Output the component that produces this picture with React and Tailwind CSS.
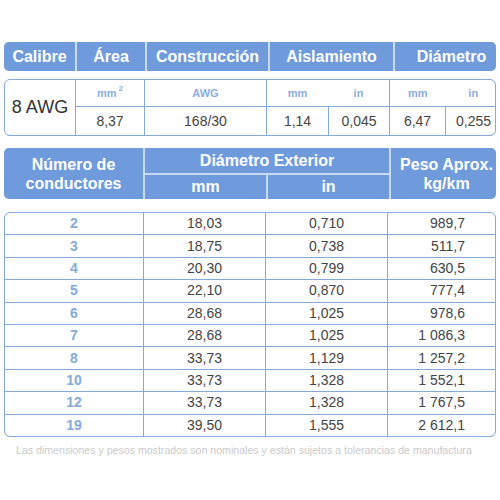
const ROWS = [
  ['2', '18,03', '0,710', '989,7'],
  ['3', '18,75', '0,738', '511,7'],
  ['4', '20,30', '0,799', '630,5'],
  ['5', '22,10', '0,870', '777,4'],
  ['6', '28,68', '1,025', '978,6'],
  ['7', '28,68', '1,025', '1 086,3'],
  ['8', '33,73', '1,129', '1 257,2'],
  ['10', '33,73', '1,328', '1 552,1'],
  ['12', '33,73', '1,328', '1 767,5'],
  ['19', '39,50', '1,555', '2 612,1'],
]

function Th({ children, className = '' }) {
  return (
    <div className={`flex items-center justify-center bg-[#6f9bdc] font-bold text-[16px] leading-[18px] text-white ${className}`}>
      {children}
    </div>
  )
}

function Sub({ children, className = '' }) {
  return (
    <div className={`flex items-center bg-white text-[11px] font-bold text-[#8aaedf] ${className}`}>
      {children}
    </div>
  )
}

function Td({ children, className = 'text-[14px] text-[#444]' }) {
  return (
    <div className={`flex items-center justify-center bg-white ${className}`}>
      {children}
    </div>
  )
}

export default function App() {
  return (
    <div className="h-[500px] w-[500px] bg-white pt-[42px] pl-[4px]" style={{ fontFamily: '"Liberation Sans", Arial, sans-serif' }}>
      <div className="w-[492px]">
        {/* Calibre table */}
        <div className="grid grid-cols-[71px_68px_121px_61px_60px_55px_56px] gap-[2px] overflow-hidden rounded-[5px] bg-[#c9dbf3]">
          <Th className="h-[29px]">Calibre</Th>
          <Th>Área</Th>
          <Th>Construcción</Th>
          <Th className="col-span-2">Aislamiento</Th>
          <Th className="col-span-2">Diámetro</Th>
        </div>

        <div className="mt-[8px] grid grid-cols-[70px_68px_121px_61px_60px_55px_55px] grid-rows-[26px_28px] gap-px overflow-hidden rounded-[6px] border border-[#86a9dc] bg-[#86a9dc]">
          <Td className="row-span-2 text-[18px] text-[#333]">8 AWG</Td>
          <Sub className="justify-center">
            mm<sup className="ml-[2px] text-[8px]">2</sup>
          </Sub>
          <Sub className="justify-center">AWG</Sub>
          <Sub className="col-span-2">
            <span className="flex-1 text-center">mm</span>
            <span className="flex-1 text-center">in</span>
          </Sub>
          <Sub className="col-span-2">
            <span className="flex-1 text-center">mm</span>
            <span className="flex-1 text-center">in</span>
          </Sub>
          <Td>8,37</Td>
          <Td>168/30</Td>
          <Td>1,14</Td>
          <Td>0,045</Td>
          <Td>6,47</Td>
          <Td>0,255</Td>
        </div>

        {/* Conductores table */}
        <div className="mt-[12px] grid grid-cols-[139px_121px_121px_111px] grid-rows-[25px_24px] gap-[2px] overflow-hidden rounded-[5px] bg-[#c9dbf3]">
          <Th className="row-span-2 flex-col leading-[19px]">
            <span>Número de</span>
            <span>conductores</span>
          </Th>
          <Th className="col-span-2">Diámetro Exterior</Th>
          <Th className="row-span-2 flex-col leading-[19px]">
            <span>Peso Aprox.</span>
            <span>kg/km</span>
          </Th>
          <Th>mm</Th>
          <Th>in</Th>
        </div>

        <div className="mt-[13px] grid auto-rows-[21.4px] grid-cols-[138px_121px_121px_110px] gap-px overflow-hidden rounded-[6px] border border-[#86a9dc] bg-[#86a9dc]">
          {ROWS.map(([n, mm, inch, kg]) => (
            <div key={n} className="contents">
              <Td className="text-[14px] font-bold text-[#86aadc]">{n}</Td>
              <Td>{mm}</Td>
              <Td>{inch}</Td>
              <Td className="justify-end! pr-[33px] text-[14px] text-[#444]">{kg}</Td>
            </div>
          ))}
        </div>

        <p className="mt-[6px] pl-[12px] text-[10.6px] text-[#cacaca]">
          Las dimensiones y pesos mostrados son nominales y están sujetos a tolerancias de manufactura
        </p>
      </div>
    </div>
  )
}
